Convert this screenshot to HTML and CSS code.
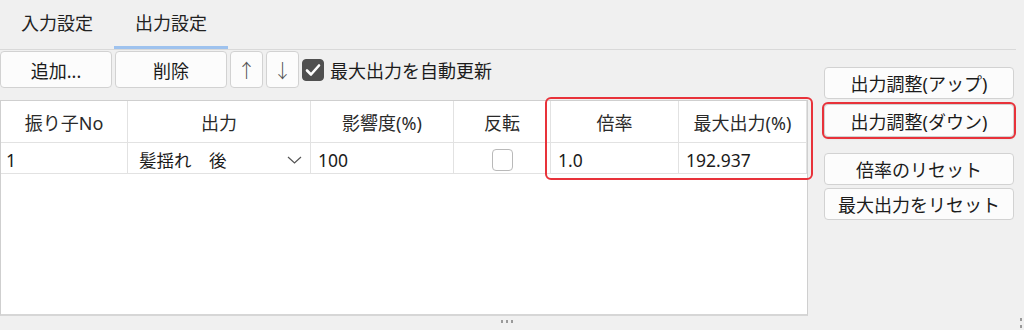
FILE: index.html
```html
<!DOCTYPE html>
<html lang="ja">
<head>
  <meta charset="UTF-8" />
  <meta name="viewport" content="width=device-width, initial-scale=1.0" />
  <title>出力設定</title>
  <link rel="stylesheet" href="styles.css">
</head>
<body>
  <div class="tabs">
    <div class="tab">入力設定</div>
    <div class="tab active">出力設定</div>
  </div>

  <div class="content">
    <div class="main">
      <div class="toolbar">
        <button class="btn wide">追加...</button>
        <button class="btn wide">削除</button>
        <button class="btn arrow">↑</button>
        <button class="btn arrow">↓</button>
        <label class="auto">
          <span class="check on">
            <svg width="16" height="14" viewBox="0 0 16 14"><path d="M2 7.5 L6 11.5 L14 2.5" fill="none" stroke="#fff" stroke-width="2.6" stroke-linecap="round" stroke-linejoin="round"/></svg>
          </span>
          最大出力を自動更新
        </label>
      </div>

      <div class="grid-wrap">
        <div class="grid">
          <div class="th">振り子No</div>
          <div class="th">出力</div>
          <div class="th">影響度(%)</div>
          <div class="th">反転</div>
          <div class="th">倍率</div>
          <div class="th">最大出力(%)</div>

          <div class="td">1</div>
          <div class="td combo">
            <span>髪揺れ　後</span>
            <svg class="chev" width="15" height="8" viewBox="0 0 15 8"><path d="M1 1 L7.5 7 L14 1" fill="none" stroke="#555" stroke-width="1.2"/></svg>
          </div>
          <div class="td">100</div>
          <div class="td center"><span class="check"></span></div>
          <div class="td">1.0</div>
          <div class="td">192.937</div>
        </div>
        <!-- highlight drawn over the last two columns -->
        <div class="mark mark-cols"></div>
      </div>
    </div>

    <div class="side">
      <button class="btn side-btn">出力調整(アップ)</button>
      <button class="btn side-btn marked">出力調整(ダウン)</button>
      <button class="btn side-btn reset">倍率のリセット</button>
      <button class="btn side-btn">最大出力をリセット</button>
    </div>
  </div>

  <div class="footer">
    <span class="dot"></span><span class="dot"></span><span class="dot"></span>
    <div class="corner"><span class="dot"></span><span class="dot"></span></div>
  </div>
</body>
</html>
```

FILE: styles.css
```css
body {
  margin: 0;
  background: #f0f0f0;
  color: #1b1b1b;
  font-family: "Noto Sans", "Noto Sans CJK JP", sans-serif;
  font-size: 18px;
  width: 1024px;
  height: 330px;
  overflow: hidden;
  position: relative;
}
.tabs {
  display: flex;
  width: 1016px;
  height: 49px;
  border-bottom: 1px solid #d9d9d9;
}
.tab {
  width: 114px;
  height: 46px;
  line-height: 46px;
  text-align: center;
  color: #222;
}
.tab.active {
  border-bottom: 3px solid #9ec2ee;
}
.content {
  display: flex;
}
.main {
  width: 808px;
}
.btn {
  font-family: inherit;
  font-size: 18px;
  color: #1b1b1b;
  background: #fcfcfc;
  border: 1px solid #d2d2d2;
  border-radius: 4px;
  padding: 0;
  margin: 0;
}
.toolbar {
  display: flex;
  align-items: center;
  height: 37px;
  margin-top: 1px;
}
.toolbar .wide {
  width: 112px;
  height: 37px;
  margin-right: 3px;
}
.toolbar .arrow {
  width: 33px;
  height: 37px;
  margin-right: 3px;
  font-size: 19px;
  font-weight: 300;
  color: #555;
}
.auto {
  display: flex;
  align-items: center;
  margin-left: 0;
  gap: 6px;
}
.check {
  display: inline-flex;
  align-items: center;
  justify-content: center;
  box-sizing: border-box;
  width: 21px;
  height: 22px;
  border: 1px solid #b9b9b9;
  border-radius: 4px;
  background: #fff;
}
.check.on {
  width: 22px;
  background: #505050;
  border-color: #505050;
}
.grid-wrap {
  position: relative;
  margin-top: 12px;
}
.grid {
  display: grid;
  grid-template-columns: 127px 183px 143px 97px 128px 128px;
  grid-template-rows: 42px 31px;
  align-content: start;
  height: 213px;
  background: #fff;
  border: 1px solid #cfcfcf;
  border-bottom: 2px solid #d6d6d6;
}
.th, .td {
  border-right: 1px solid #e2e2e2;
  border-bottom: 1px solid #e2e2e2;
  display: flex;
  align-items: center;
  white-space: nowrap;
}
.th {
  justify-content: center;
  color: #2a2a2a;
}
.td {
  padding-left: 7px;
  padding-top: 3px;
  font-size: 17.5px;
}
.td:first-child, .grid .td:nth-child(7) {
  padding-left: 5px;
}
.combo {
  justify-content: space-between;
  padding: 3px 8px 0 11px;
}
.td.center {
  justify-content: center;
  padding-left: 0;
}
.mark {
  position: absolute;
  border: 2px solid #e8323a;
  border-radius: 6px;
  pointer-events: none;
}
.mark-cols {
  left: 545px;
  top: -3px;
  width: 264px;
  height: 79px;
}
.side {
  display: flex;
  flex-direction: column;
  margin-left: 16px;
  padding-top: 17px;
}
.side-btn {
  width: 190px;
  height: 32px;
  margin-bottom: 5px;
}
.side-btn.marked {
  height: 33px;
  outline: 2px solid #e8323a;
  outline-offset: 0;
  box-shadow: 0 1px 3px rgba(0, 0, 0, 0.18);
  margin-bottom: 16px;
}
.side-btn.reset {
  margin-bottom: 3px;
}
.footer {
  display: flex;
  justify-content: center;
  gap: 3px;
  padding-top: 4px;
  padding-right: 10px;
}
.dot {
  width: 2px;
  height: 3px;
  background: #9a9a9a;
}
.corner {
  position: absolute;
  right: 2px;
  bottom: 2px;
  display: flex;
  flex-direction: column;
  gap: 4px;
}
```
